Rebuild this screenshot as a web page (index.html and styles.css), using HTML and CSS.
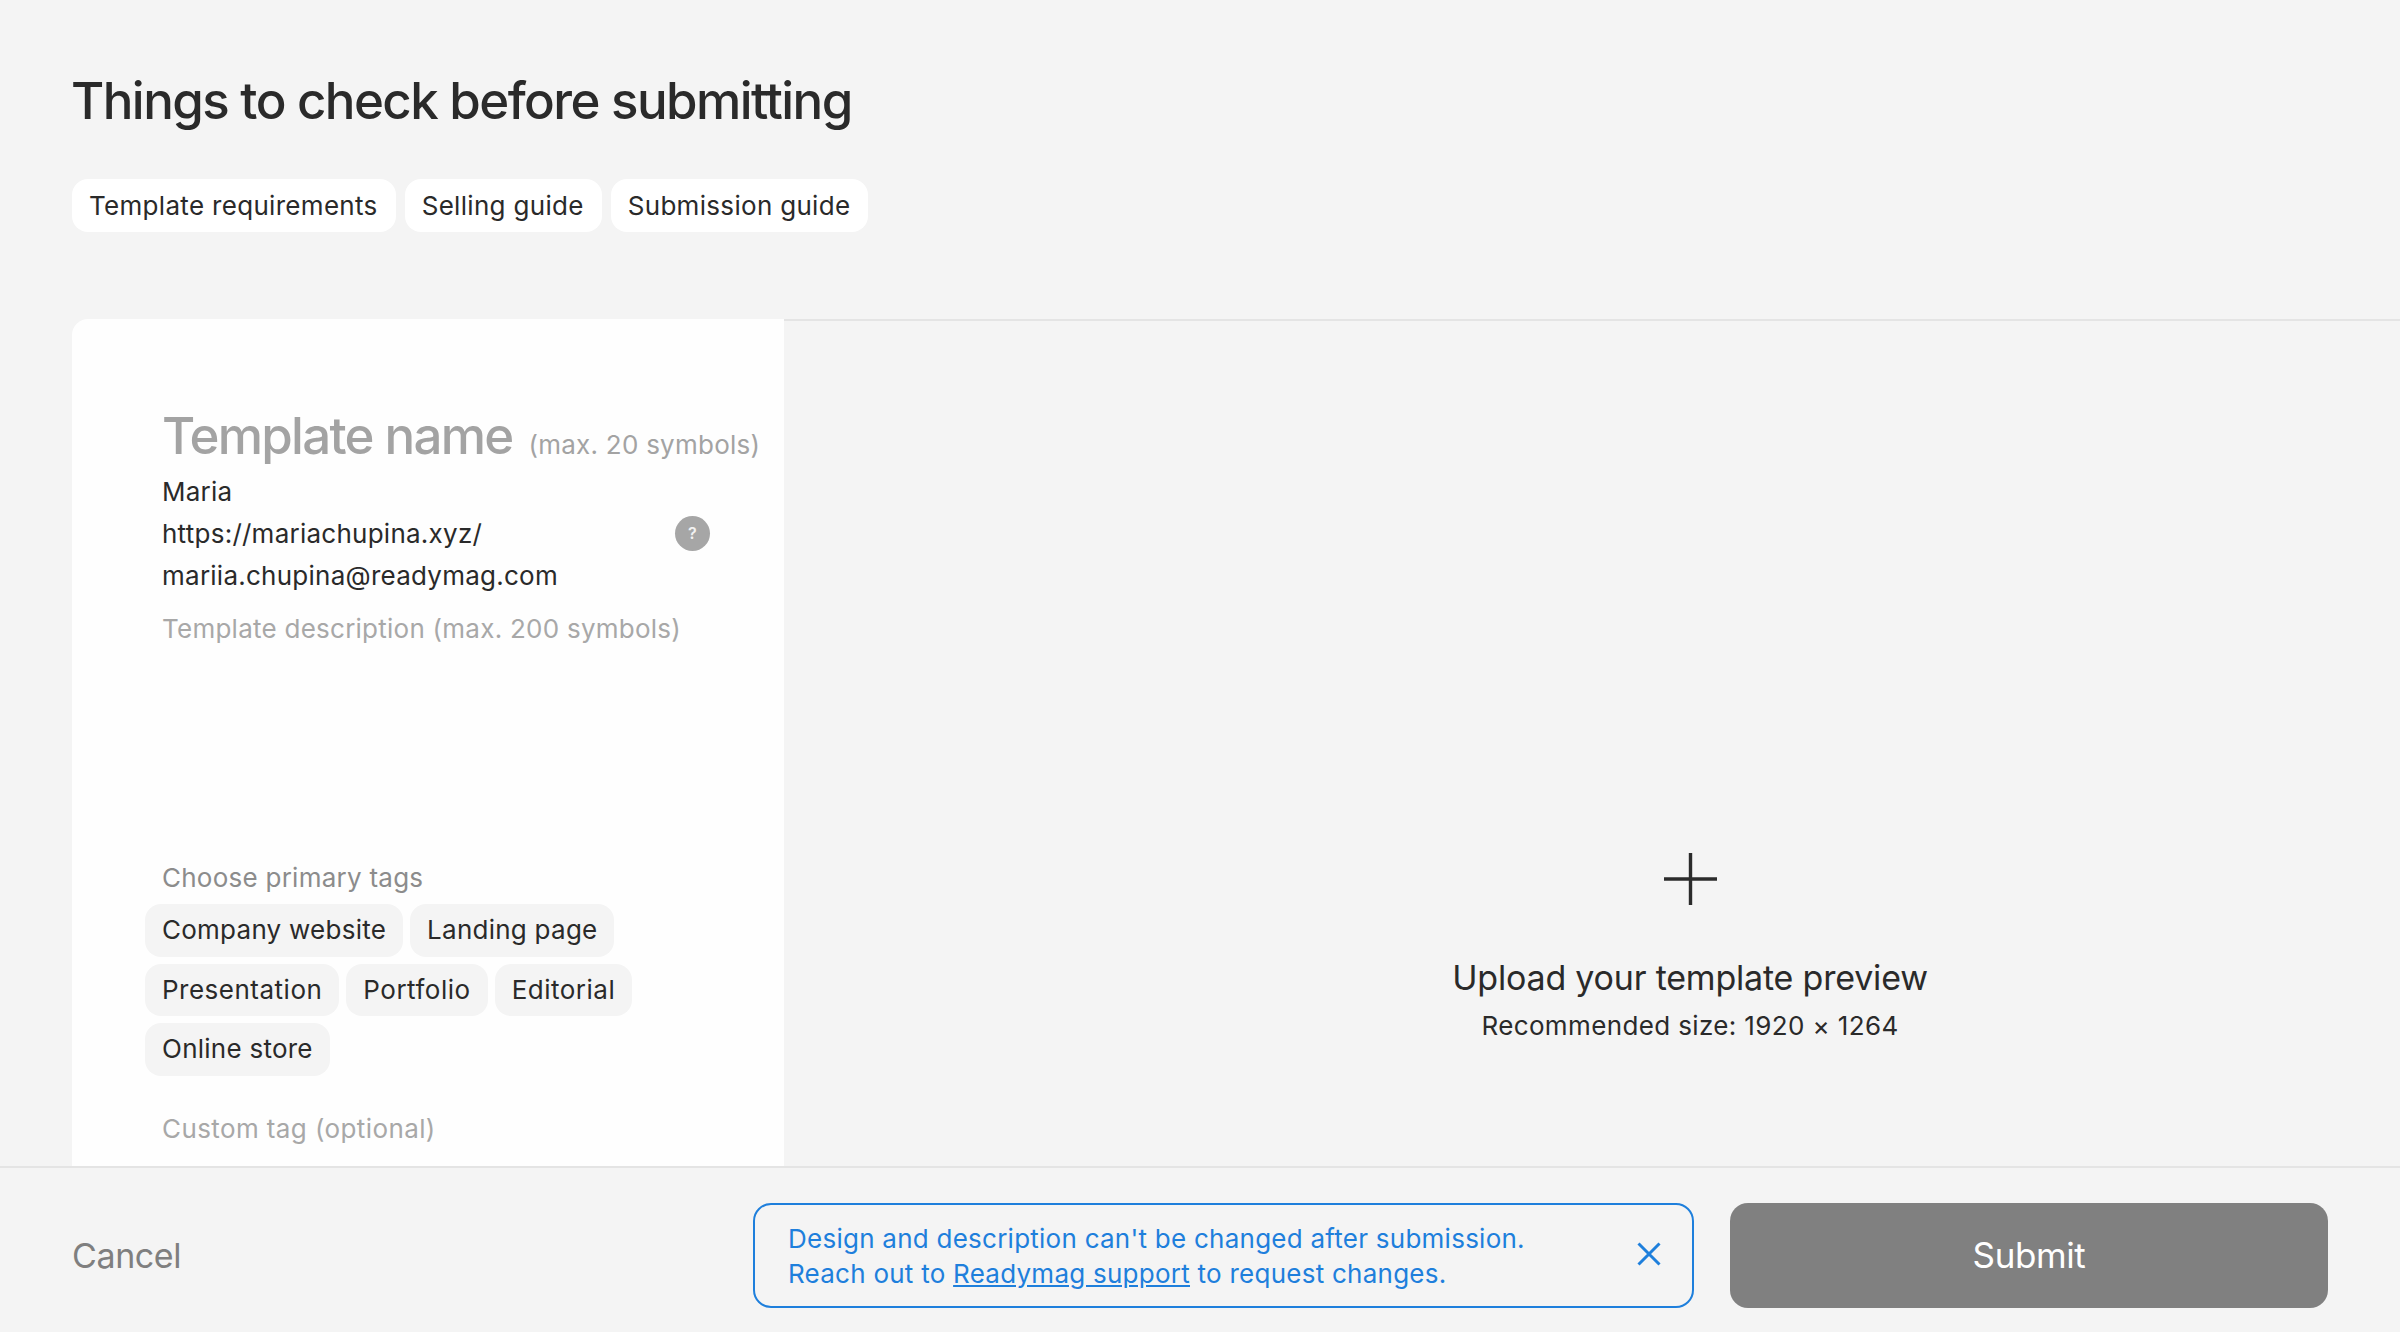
FILE: index.html
```html
<!DOCTYPE html>
<html lang="en">
<head>
<meta charset="utf-8">
<title>Things to check before submitting</title>
<link rel="stylesheet" href="styles.css">
</head>
<body>
<div class="page">
  <header class="header">
    <h1 class="title">Things to check before submitting</h1>
    <nav class="guides">
      <a class="pill">Template requirements</a>
      <a class="pill">Selling guide</a>
      <a class="pill">Submission guide</a>
    </nav>
  </header>
  <main class="main">
    <section class="card">
      <div class="name-row"><span class="name">Template name</span><span class="name-hint">(max. 20 symbols)</span></div>
      <div class="author">Maria</div>
      <div class="author author-link"><span>https://mariachupina.xyz/</span><span class="help">?</span></div>
      <div class="author">mariia.chupina@readymag.com</div>
      <div class="desc">Template description (max. 200 symbols)</div>
      <div class="tags-label">Choose primary tags</div>
      <div class="tags">
        <span class="tag">Company website</span>
        <span class="tag">Landing page</span>
        <span class="tag tag-loose">Presentation</span>
        <span class="tag tag-loose">Portfolio</span>
        <span class="tag tag-loose">Editorial</span>
        <span class="tag">Online store</span>
      </div>
      <div class="custom">Custom tag (optional)</div>
    </section>
    <section class="upload">
      <svg class="plus" width="53" height="52" viewBox="0 0 53 52" aria-hidden="true"><path d="M26.5 0V52M0 26H53" fill="none" stroke="#2b2b2b" stroke-width="3.4"/></svg>
      <div class="upload-title">Upload your template preview</div>
      <div class="upload-size">Recommended size: 1920 × 1264</div>
    </section>
  </main>
  <footer class="footer">
    <a class="cancel">Cancel</a>
    <div class="actions">
      <div class="notice">
        <p class="notice-text">Design and description can't be changed after submission.<br>Reach out to <a class="notice-link">Readymag support</a> to request changes.</p>
        <svg class="close" width="24" height="24" viewBox="0 0 24 24" aria-hidden="true"><path d="M1.5 1.5L22.5 22.5M22.5 1.5L1.5 22.5" fill="none" stroke="#1e7fdc" stroke-width="3"/></svg>
      </div>
      <button class="submit">Submit</button>
    </div>
  </footer>
</div>
</body>
</html>
```
FILE: styles.css
```css
* { box-sizing: border-box; }
html, body { margin: 0; height: 100%; }
body { background: #f4f4f4; color: #2a2a2a; font-family: Inter, "Liberation Sans", sans-serif; font-size: 26px; letter-spacing: 0.25px; overflow: hidden; }
.page { height: 1332px; display: flex; flex-direction: column; }
.header { height: 319px; padding: 69px 72px 0; flex: none; }
.title { margin: 0 0 0 -1px; font-size: 51px; line-height: 64px; font-weight: 500; letter-spacing: -1.55px; color: #2a2a2a; }
.guides { display: flex; gap: 9px; margin-top: 46px; }
.pill { height: 53px; padding: 0 18px 0 17px; background: #fff; border-radius: 16px; line-height: 53px; letter-spacing: 0.31px; color: #2a2a2a; }
.main { flex: 1; display: flex; min-height: 0; padding-left: 72px; }
.card { width: 712px; flex: none; background: #fefefe; border-radius: 16px 0 0 0; padding: 91px 0 0 90px; overflow: hidden; }
.name-row { display: flex; align-items: baseline; gap: 16px; line-height: 52px; white-space: nowrap; }
.name { font-size: 51px; font-weight: 500; color: #a3a3a3; letter-spacing: -1.75px; }
.name-hint { color: #a3a3a3; }
.author { line-height: 42px; color: #2a2a2a; }
.author-link { display: flex; justify-content: space-between; align-items: center; width: 548px; }
.help { width: 35px; height: 35px; margin-top: -2px; border-radius: 50%; background: #a6a6a6; color: #f2f2f2; font-size: 16px; font-weight: 600; line-height: 35px; text-align: center; }
.desc { margin-top: 11px; line-height: 42px; color: #a8a8a8; }
.tags-label { margin-top: 207px; line-height: 42px; color: #8c8c8c; }
.tags { display: flex; flex-wrap: wrap; gap: 7px; width: 520px; margin: 5px 0 0 -17px; }
.tag { height: 52.5px; padding: 0 17px; line-height: 52.5px; background: #f4f4f4; border-radius: 16px; color: #2a2a2a; }
.tag-loose { letter-spacing: 0.5px; }
.custom { margin-top: 32px; line-height: 42px; letter-spacing: 0.4px; color: #a8a8a8; }
.upload { flex: 1; border-top: 2px solid #e4e4e4; display: flex; flex-direction: column; align-items: center; padding: 532px 0 0 196px; }
.plus { display: block; }
.upload-title { margin-top: 49px; font-size: 34px; line-height: 48px; letter-spacing: -0.2px; color: #2a2a2a; }
.upload-size { margin-top: 3px; line-height: 42px; letter-spacing: 0.37px; color: #2a2a2a; }
.footer { height: 166px; flex: none; border-top: 2px solid #e4e4e4; display: flex; align-items: center; justify-content: space-between; padding: 10px 72px 0; }
.cancel { font-size: 34px; letter-spacing: -0.4px; color: #7f7f7f; }
.actions { display: flex; gap: 36px; }
.notice { width: 941px; height: 105px; border: 2px solid #1e7fdc; border-radius: 18px; padding: 0 31px 0 33px; display: flex; align-items: center; justify-content: space-between; color: #1e7fdc; }
.notice-text { margin: 2px 0 0; line-height: 35px; }
.notice-link { text-decoration: underline; }
.close { display: block; margin-top: -2px; }
.submit { width: 598px; height: 105px; border: 0; border-radius: 18px; background: #808080; color: #fff; font: 400 35px Inter, "Liberation Sans", sans-serif; letter-spacing: -0.4px; }
```
